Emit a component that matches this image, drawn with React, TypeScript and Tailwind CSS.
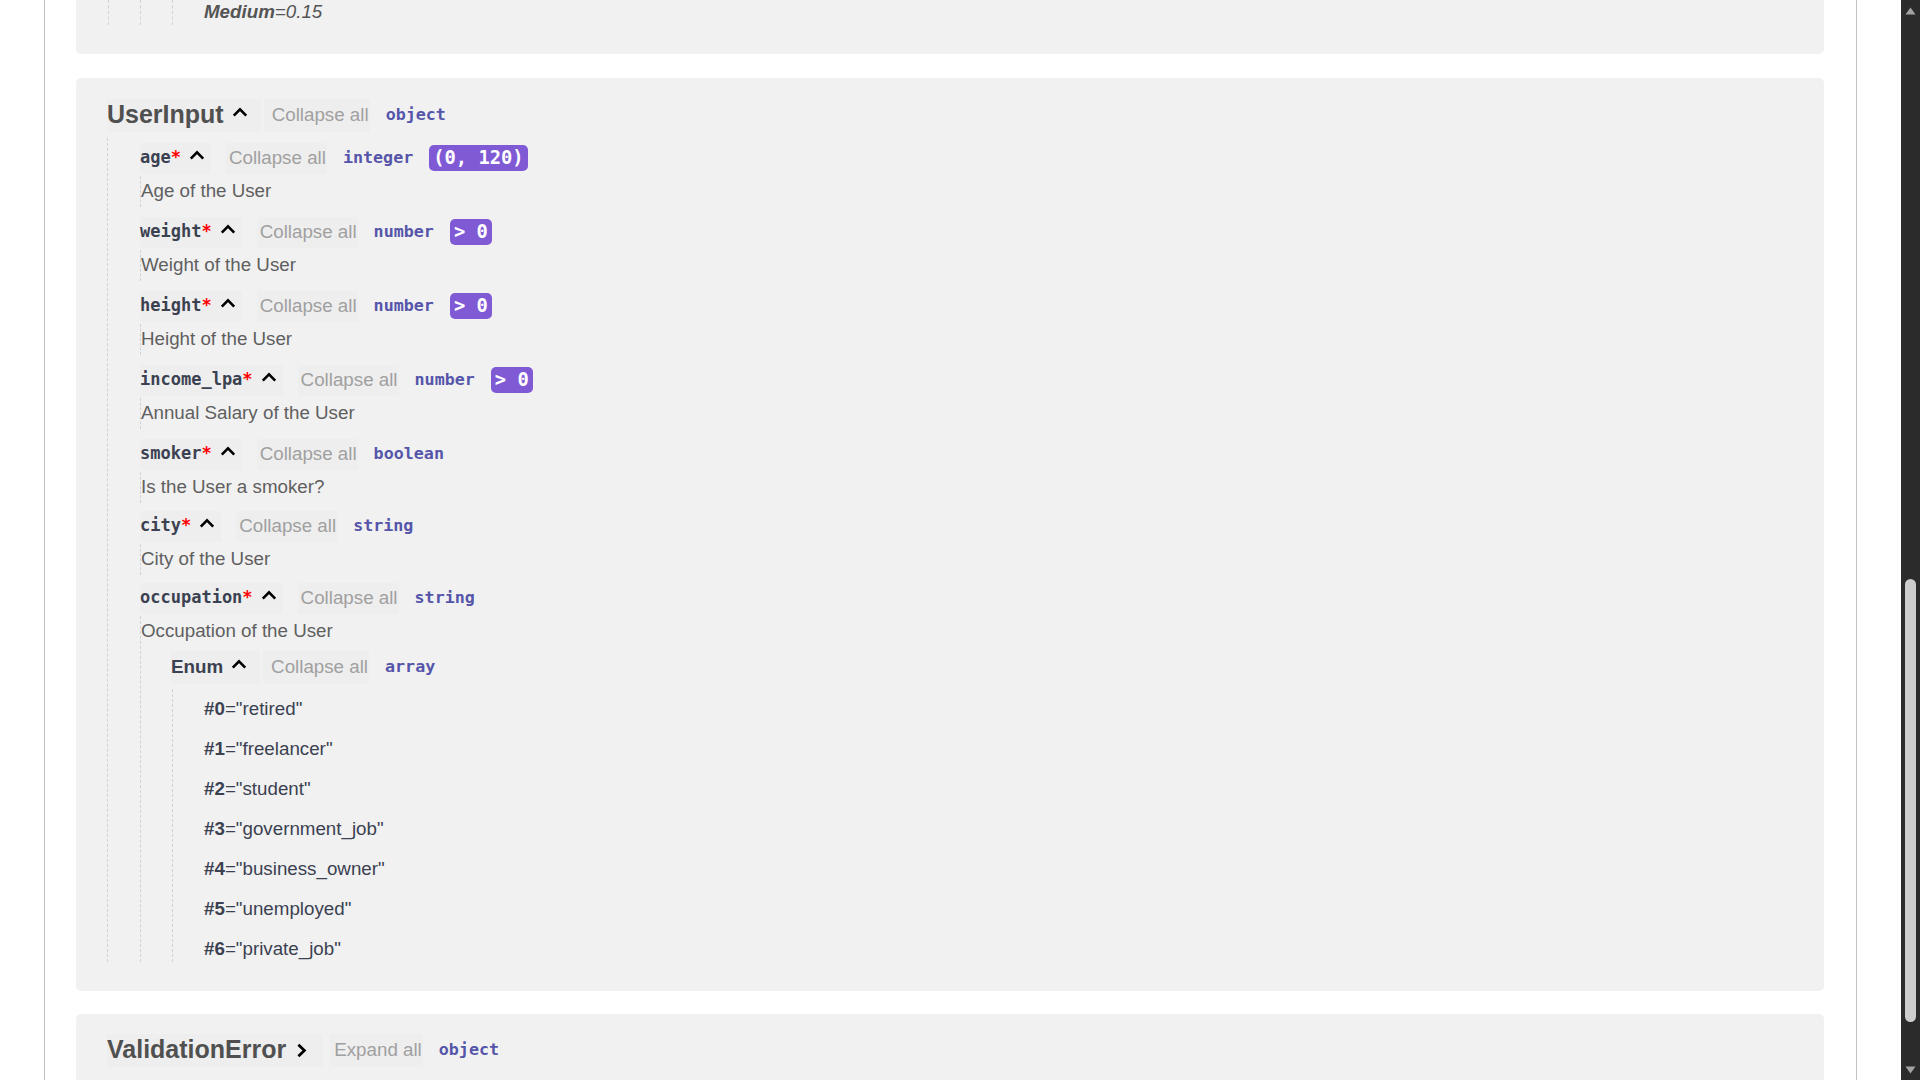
import React from 'react';

const SANS = "font-['Liberation_Sans',Arial,sans-serif]";
const MONO = "font-['DejaVu_Sans_Mono','Liberation_Mono',monospace]";

type Field = {
  name: string;
  type: string;
  badge?: string;
  desc: string;
  enumValues?: string[];
};

const fields: Field[] = [
  { name: 'age', type: 'integer', badge: '(0, 120)', desc: 'Age of the User' },
  { name: 'weight', type: 'number', badge: '> 0', desc: 'Weight of the User' },
  { name: 'height', type: 'number', badge: '> 0', desc: 'Height of the User' },
  { name: 'income_lpa', type: 'number', badge: '> 0', desc: 'Annual Salary of the User' },
  { name: 'smoker', type: 'boolean', desc: 'Is the User a smoker?' },
  { name: 'city', type: 'string', desc: 'City of the User' },
  {
    name: 'occupation',
    type: 'string',
    desc: 'Occupation of the User',
    enumValues: ['retired', 'freelancer', 'student', 'government_job', 'business_owner', 'unemployed', 'private_job'],
  },
];

const ChevronUp = () => (
  <svg width="16" height="10" viewBox="0 0 16 10" className="mb-[6px] shrink-0">
    <path d="M1.8 8.6 L8 2.4 L14.2 8.6" fill="none" stroke="#000" strokeWidth="2.6" />
  </svg>
);

const ChevronRight = () => (
  <svg width="11" height="15" viewBox="0 0 11 15" className="shrink-0">
    <path d="M2.4 1.8 L8.4 7.5 L2.4 13.2" fill="none" stroke="#000" strokeWidth="2.8" />
  </svg>
);

const TypeLabel = ({ children }: { children: React.ReactNode }) => (
  <span className={`${MONO} text-[16.7px] font-bold text-[#55a]`}>{children}</span>
);

const FieldRow = ({ field }: { field: Field }) => (
  <div className={field.badge ? 'mb-[7px]' : field.enumValues ? '' : 'mb-[5px]'}>
    {/* header */}
    <div className="flex h-[36px] items-center">
      <div className="flex h-[31px] items-center bg-[#eeeeee] pr-[6px]">
        <span className={`${MONO} text-[17px] font-bold text-[#3b4151]`}>
          {field.name}
          <span className="text-[#ff0000]">*</span>
        </span>
        <span className="ml-[8px] flex">
          <ChevronUp />
        </span>
      </div>
      <span className="ml-[15px] flex h-[31px] items-center bg-[#eeeeee] pl-[3px] pr-[1px] text-[18.75px] text-[#a0a0a0]">
        Collapse all
      </span>
      <span className="ml-[16px]">
        <TypeLabel>{field.type}</TypeLabel>
      </span>
      {field.badge && (
        <span
          className={`${MONO} ml-[16px] flex h-[26px] items-center rounded-[5px] bg-[#805ad5] px-[4px] text-[18.75px] font-bold text-white`}
        >
          {field.badge}
        </span>
      )}
    </div>

    {/* body */}
    <div className="border-l border-dashed border-[#d2d2d2]">
      <div className="flex h-[31px] items-center text-[18.75px] text-[#5f5f5f]">{field.desc}</div>

      {field.enumValues && (
        <div className="ml-[30px]">
          <div className="mt-[2px] flex h-[36px] items-center">
            <div className="flex h-[33px] items-center bg-[#eeeeee] pr-[13px]">
              <span className="text-[18.75px] font-bold text-[#3b4151]">Enum</span>
              <span className="ml-[8px] flex">
                <ChevronUp />
              </span>
            </div>
            <span className="ml-[3px] flex h-[33px] items-center bg-[#eeeeee] pl-[8px] pr-[1px] text-[18.75px] text-[#a0a0a0]">
              Collapse all
            </span>
            <span className="ml-[16px]">
              <TypeLabel>array</TypeLabel>
            </span>
          </div>
          <div className="ml-[1px] mt-[4px] flex flex-col gap-[14px] border-l border-dashed border-[#d2d2d2] pl-[31px] pt-[7px]">
            {field.enumValues.map((v, i) => (
              <div key={v} className="flex h-[26px] items-center text-[18.75px] text-[#3b4151]">
                <span className="font-bold">#{i}</span>="{v}"
              </div>
            ))}
          </div>
        </div>
      )}
    </div>
  </div>
);

const Scrollbar = () => (
  <div className="flex h-full w-[19px] shrink-0 flex-col bg-[#2b2b2b]">
    <div className="flex h-[22px] items-center justify-center">
      <svg width="11" height="8" viewBox="0 0 11 8">
        <path d="M5.5 0.5 L10.5 7.5 L0.5 7.5 Z" fill="#a3a3a3" />
      </svg>
    </div>
    <div className="flex flex-1 justify-center">
      <div className="mt-[557px] h-[443px] w-[11px] rounded-full bg-[#cdcdcd]" />
    </div>
    <div className="flex h-[21px] items-center justify-center">
      <svg width="11" height="8" viewBox="0 0 11 8">
        <path d="M0.5 0.5 L10.5 0.5 L5.5 7.5 Z" fill="#a3a3a3" />
      </svg>
    </div>
  </div>
);

export default function App() {
  return (
    <div className={`flex h-screen w-full overflow-hidden bg-white ${SANS}`}>
      <main className="h-full flex-1 overflow-hidden">
        <div className="mx-auto h-full w-[1813px] border-x border-[#c2c2c2] pl-[31px] pr-[32px]">
          {/* tail of the previous model */}
          <div className="rounded-b-[5px] bg-[#f1f1f1] pb-[29px] pl-[32px]">
            <div className="border-l border-dashed border-[#d2d2d2] pl-[31px]">
              <div className="border-l border-dashed border-[#d2d2d2] pl-[31px]">
                <div className="border-l border-dashed border-[#d2d2d2] pl-[31px]">
                  <div className="flex h-[25px] items-center text-[18.75px] italic text-[#555]">
                    <span className="font-bold">Medium</span>=0.15
                  </div>
                </div>
              </div>
            </div>
          </div>

          {/* UserInput */}
          <div className="mt-[24px] rounded-[5px] bg-[#f1f1f1] pb-[29px] pl-[31px] pt-[19px]">
            <div className="flex h-[36px] items-center">
              <div className="flex h-[33px] items-center bg-[#eeeeee] pr-[13px]">
                <span className="text-[25px] font-bold text-[#505050]">UserInput</span>
                <span className="ml-[8px] flex">
                  <ChevronUp />
                </span>
              </div>
              <span className="ml-[3px] flex h-[33px] items-center bg-[#eeeeee] pl-[8px] pr-[1px] text-[18.75px] text-[#a0a0a0]">
                Collapse all
              </span>
              <span className="ml-[16px]">
                <TypeLabel>object</TypeLabel>
              </span>
            </div>

            <div className="mt-[5px] border-l border-dashed border-[#d2d2d2] pl-[32px] pt-[2px]">
              {fields.map((f) => (
                <FieldRow key={f.name} field={f} />
              ))}
            </div>
          </div>

          {/* ValidationError */}
          <div className="mt-[23px] h-[200px] rounded-[5px] bg-[#f1f1f1] pl-[31px] pt-[18px]">
            <div className="flex h-[36px] items-center">
              <div className="flex h-[33px] items-center bg-[#eeeeee] pr-[16px]">
                <span className="text-[25px] font-bold text-[#505050]">ValidationError</span>
                <span className="ml-[10px] flex">
                  <ChevronRight />
                </span>
              </div>
              <span className="ml-[7px] flex h-[33px] items-center bg-[#eeeeee] pl-[4px] pr-[1px] text-[18.75px] text-[#a0a0a0]">
                Expand all
              </span>
              <span className="ml-[16px]">
                <TypeLabel>object</TypeLabel>
              </span>
            </div>
          </div>
        </div>
      </main>
      <Scrollbar />
    </div>
  );
}
